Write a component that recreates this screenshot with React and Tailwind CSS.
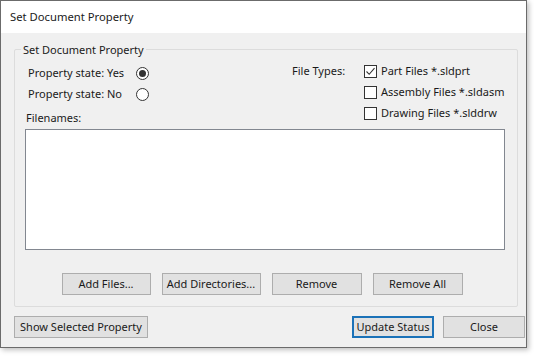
import React from "react";

const font = { fontFamily: '"Noto Sans", "Open Sans", sans-serif' };

function Radio({ checked }) {
  return (
    <span className="w-[13px] h-[13px] rounded-full border border-[#333] bg-white flex items-center justify-center">
      {checked && <span className="w-[7px] h-[7px] rounded-full bg-[#333]" />}
    </span>
  );
}

function Check({ checked, label }) {
  return (
    <div className="flex items-center h-[21px]">
      <span className="w-[13px] h-[13px] border border-[#333] bg-white flex items-center justify-center">
        {checked && (
          <svg width="11" height="11" viewBox="0 0 11 11">
            <path d="M1.5 5.5 L4.2 8.3 L9.5 2.2" fill="none" stroke="#333" strokeWidth="1.1" />
          </svg>
        )}
      </span>
      <span className="ml-[4px] whitespace-nowrap">{label}</span>
    </div>
  );
}

function Btn({ children, w, primary }) {
  return (
    <button
      className={
        "h-[22px] bg-[#e1e1e1] text-[#1a1a1a] flex items-center justify-center whitespace-nowrap " +
        (primary ? "border-2 border-[#1b72b8]" : "border border-[#adadad]")
      }
      style={{ width: w }}
    >
      {children}
    </button>
  );
}

export default function App() {
  return (
    <div className="w-[534px] h-[356px] bg-white text-[11px] text-[#1a1a1a]" style={font}>
      <div className="w-[527px] h-[348px] border border-[#6b6b6b] bg-[#f0f0f0] flex flex-col shadow-[2px_2px_5px_rgba(0,0,0,0.25)]">
        <div className="h-[32px] bg-white flex items-center pl-[9px] shrink-0 text-[11.25px]">Set Document Property</div>

        <div className="relative ml-[13px] mr-[8px] mt-[16px] h-[258px] border border-[#dcdcdc] rounded-[2px]">
          <span className="absolute -top-[8px] left-[6px] bg-[#f0f0f0] px-[2px]">Set Document Property</span>

          <div className="flex pt-[11px]">
            <div className="w-[277px] pl-[13px] pt-[2px]">
              <div className="flex items-center h-[21px]">
                <span className="w-[108px] whitespace-nowrap">Property state: Yes</span>
                <Radio checked />
              </div>
              <div className="flex items-center h-[21px]">
                <span className="w-[108px] whitespace-nowrap">Property state: No</span>
                <Radio />
              </div>
            </div>
            <div className="flex">
              <span className="h-[21px] w-[72px] flex items-center whitespace-nowrap">File Types:</span>
              <div>
                <Check checked label="Part Files *.sldprt" />
                <Check label="Assembly Files *.sldasm" />
                <Check label="Drawing Files *.slddrw" />
              </div>
            </div>
          </div>

          <div className="pl-[11px] -mt-[14px] h-[16px] leading-[16px]">Filenames:</div>
          <div className="ml-[10px] mr-[12px] mt-[3px] h-[121px] bg-white border border-[#828790]" />

          <div className="flex justify-center gap-[11px] mt-[23px] pr-[8px]">
            <Btn w="89px">Add Files...</Btn>
            <Btn w="99px">Add Directories...</Btn>
            <Btn w="90px">Remove</Btn>
            <Btn w="90px">Remove All</Btn>
          </div>
        </div>

        <div className="flex items-center mt-[9px] ml-[13px] mr-[1px]">
          <Btn w="134px">Show Selected Property</Btn>
          <div className="ml-auto flex gap-[9px]">
            <Btn w="82px" primary>Update Status</Btn>
            <Btn w="82px">Close</Btn>
          </div>
        </div>
      </div>
    </div>
  );
}
